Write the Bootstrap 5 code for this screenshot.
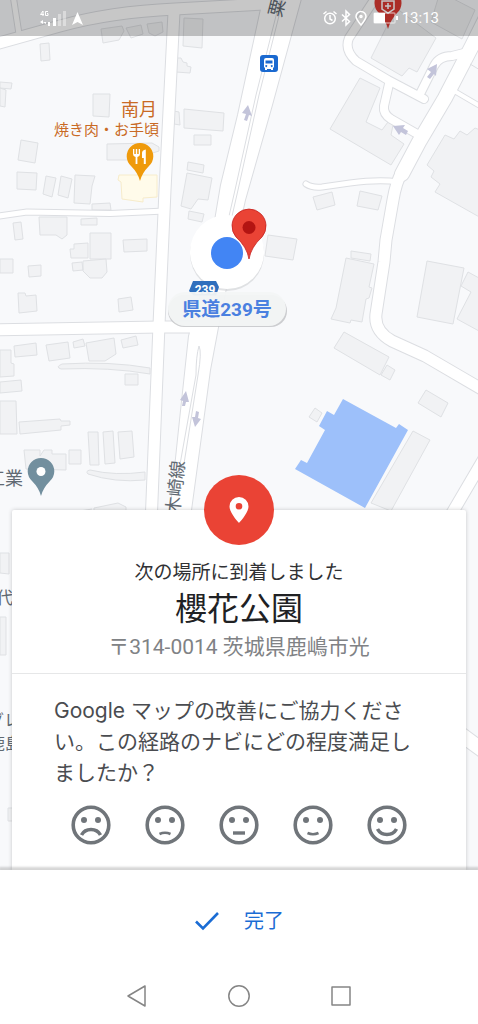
<!DOCTYPE html>
<html lang="ja">
<head>
<meta charset="utf-8">
<meta name="viewport" content="width=device-width, initial-scale=1">
<title>到着 - 櫻花公園</title>
<link href="https://cdn.jsdelivr.net/npm/bootstrap@5.3.0/dist/css/bootstrap.min.css" rel="stylesheet">
<style>
  body { font-family: Roboto, "Noto Sans CJK JP", sans-serif; background: #fff; color: #202124; }
  .map-view { background: #f8f9fb; }
  .map-canvas { z-index: 0; }
  .status-bar { height: 36px; background: rgba(0, 0, 0, .22); color: #fff; padding-left: 39px; padding-right: 39px; z-index: 1; }
  .clock { font-size: 15px; line-height: 20px; }

  .arrival { margin: 0 12px; border: 0; border-radius: 2px 2px 0 0; box-shadow: 0 0 4px rgba(0, 0, 0, .2); z-index: 1; }
  .arrival-head { padding: 51px 16px 12px; border-bottom: 1px solid #e6e7e8; }
  .arrival-pin { width: 70px; height: 70px; background: #ea4335; color: #fff; }
  .notice { font-size: 19px; line-height: 24px; color: #303134; }
  .place { font-size: 32px; line-height: 48px; font-weight: 400; }
  .address { font-size: 21px; line-height: 28px; color: #808285; }
  .survey { padding: 21px 42px 25px; }
  .question { font-family: Inter, "Noto Sans CJK JP", sans-serif; font-size: 21px; line-height: 31px; color: #4a4c50; margin-bottom: 17px; }
  .rating { margin: 0 17px; }
  .face { width: 40px; height: 40px; color: #70757a; }
  .face svg, .done svg, .nav-key svg { display: block; }
  .ring { fill: none; stroke: currentColor; stroke-width: 3.6; }
  .mouth { fill: none; stroke: currentColor; stroke-width: 2.6; }
  .mouth-big { fill: none; stroke: currentColor; stroke-width: 3.6; }

  .bottom-bar { background: #fff; box-shadow: 0 -2px 2px 1px rgba(0, 0, 0, .16); padding-bottom: 4px; z-index: 2; }
  .done { height: 102px; color: #1a6cd4; font-size: 20px; gap: 24px; }
  .done:hover { color: #1a6cd4; }
  .nav-keys { height: 48px; padding: 0 87px; }
  .nav-key { width: 100px; height: 48px; color: #858585; }

  .casing { color: #dcdee2; --edge: 2px; }
  .surface { color: #fff; --edge: 0px; }
  .w4, .w5, .w8, .w12, .w14 { fill: none; stroke: currentColor; stroke-linecap: round; stroke-linejoin: round; }
  .w4 { stroke-width: calc(4px + var(--edge)); }
  .w5 { stroke-width: calc(5px + var(--edge)); }
  .w8 { stroke-width: calc(8px + var(--edge)); }
  .w12 { stroke-width: calc(11px + var(--edge)); }
  .w14 { stroke-width: calc(14px + var(--edge)); }
  .wide { fill: currentColor; stroke: currentColor; stroke-width: var(--edge); }
  .bldg { fill: #f1f2f4; stroke: #dfe1e4; stroke-width: 1; }
  .shop { fill: #fffbea; stroke: #f7eccb; }
  .flow { fill: #c3c4da; }
  .poi { font-family: Roboto, "Noto Sans CJK JP", sans-serif; fill: #616a73; }
  .poi-food { fill: #c96a25; }
  .shield-no { fill: #fff; font-weight: 700; font-size: 12px; }
  .road-tag { fill: #4a80e0; font-weight: 700; font-size: 19px; }
</style>
</head>
<body>
<div class="d-flex flex-column min-vh-100">
  <main class="map-view flex-grow-1 position-relative d-flex flex-column overflow-hidden">

    <svg class="map-canvas position-absolute top-0 start-0 w-100 h-100" viewBox="0 0 478 870" preserveAspectRatio="xMidYMin slice" role="img" aria-label="地図">
      <defs>
        <g id="roads">
          <path class="w12" d="M-8 45 L60 26 Q110 12 175 9 L265 4"/>
          <path class="w5" d="M13 -5 L19 34"/>
          <path class="w12" d="M174 12 L165 190 L159 325 L151 525"/>
          <path class="w5" d="M-8 217 L27 212 L110 213.500 L165 211"/>
          <path class="w12" d="M-8 330 L160 327 L200 327"/>
          <path class="wide" d="M264 -5 L238 115 L221 185 L205 280 L189 336 L180 420 L169 525 L189 525 L210 370 L219 322 L236 240 L245 200 L272 105 L302 -5Z"/>
          <path class="w8" d="M378 -6 L349 38 Q344 50 356 61 L388 80 L424 99"/>
          <path class="w14" d="M486 18 L472 46 L445 98 L419 142 L402 174"/>
          <path class="w12" d="M402 172 Q396 182 393 200 L386 240 L384 262 L376 314 Q374 331 392 341 L425 356 L485 391"/>
          <path class="w5" d="M306 184 Q312 188 322 187 L350 183 Q380 179 398 182"/>
          <path class="w8" d="M420 94 L434 66 Q439 56 452 56 L468 52"/>
          <path class="w8" d="M389 84 L384 106 Q383 114 391 119 L419 135"/>
          <path class="w4" d="M456 92 L485 109"/>
          <path class="w12" d="M448 520 L485 457"/>
          <path class="w14" d="M455 730 L485 752"/>
        </g>
      </defs>
      <rect width="478" height="870" fill="#f8f9fb"/>

      <g class="bldg">
        <path d="M101 29 L122 26 L124 31 L119 40 L103 43Z M126 28 L141 25 L143 34 L131 38Z M147 24 L162 22 L163 32 L155 36 L149 33Z M184 18 L203 19 L202 48 L183 46Z M40 44 L49 43 L50 60 L41 61Z"/>
        <path d="M176 58 L181 58 L183 62 L187 63 L187 66 L191 67 L190 73 L176 72Z M0 82 L12 83 L11 89 L0 88Z M0 88 L6 90 L5 107 L0 106Z M93 94 L110 94 L109 117 L93 116Z"/>
        <path d="M174 111 L179 112 L180 125 L174 124Z M184 109 L224 113 L223 131 L184 128Z M194 135 L211 135 L211 145 L194 145Z M107 144 L152 143 L159 147 L159 151 L130 160 L107 160Z"/>
        <path d="M21 140 L38 143 L35 163 L18 160Z M17 172 L37 173 L36 190 L17 189Z M46 176 L56 178 L52 197 L43 194Z M61 176 L72 179 L68 198 L58 195Z M75 175 L95 176 L92 186 L90 204 L74 203Z"/>
        <path d="M188 162 L204 165 L203 173 L187 170Z M187 173 L212 178 L208 200 L198 199 L191 209 L181 206Z M189 211 L204 214 L202 222 L188 219Z M92 204 L110 203 L111 210 L92 210Z"/>
        <path d="M39 217 L67 217 L67 235 L62 239 L56 235 L40 235Z M13 223 L21 222 L23 239 L15 240Z M81 219 L97 218 L97 225 L81 225Z M90 233 L111 233 L111 259 L90 259Z M74 244 L88 243 L88 258 L71 258 L70 249 L74 249Z"/>
        <path d="M72 263 L82 262 L83 270 L73 271Z M83 261 L106 259 L107 272 L102 278 L90 278 L83 271Z M123 240 L147 239 L147 251 L124 252Z M0 259 L13 259 L13 273 L0 273Z M28 266 L41 265 L41 276 L29 277Z"/>
        <path d="M18 293 L25 293 L26 296 L36 295 L37 311 L19 313Z M118 299 L131 297 L133 310 L119 312Z M14 346 L36 343 L37 355 L15 357Z M46 345 L68 342 L70 358 L49 361Z M73 342 L83 339 L85 346 L74 348Z M86 343 L114 338 L116 354 L105 361 L89 361Z M121 340 L136 336 L138 345 L123 348Z"/>
        <path d="M0 350 L11 350 L11 363 L14 364 L14 376 L0 377Z M0 382 L21 380 L22 391 L0 393Z M0 401 L16 401 L17 434 L0 434Z M19 422 L60 419 L61 421 L70 421 L70 425 L61 426 L61 430 L20 434Z"/>
        <path d="M125 374 L138 374 L138 385 L125 385Z M88 432 L98 432 L99 465 L90 465Z M103 432 L113 431 L115 463 L105 464Z M118 432 L132 431 L134 457 L120 459Z M69 450 L81 450 L81 464 L69 464Z M24 450 L40 450 L40 456 L44 450 L52 450 L52 454 L66 454 L66 470 L26 469Z M80 511 L92 509 M94 508 L118 503 L126 507 L126 520 L94 520Z"/>
        <path d="M0 553 L9 553 L9 574 L0 573Z M0 617 L6 617 L6 655 L0 655Z M8 808 L14 808 L14 821 L8 821Z"/>
        <path d="M396 8 L436 38 L417 72 L409 68 L402 76 L371 58Z M440 -8 L475 10 L462 39 L431 22Z M360 78 L380 88 L366 122 L382 130 L388 122 L393 125 L391 135 L404 144 L391 165 L330 129Z"/>
        <path d="M445 135 L454 139 L460 131 L467 135 L475 128 L490 134 L490 223 L435 192 L440 184 L431 177 L434 171 L427 165Z M313 197 L332 192 L335 205 L317 210Z M360 191 L382 196 L378 210 L357 206Z M268 235 L297 239 L293 260 L265 256Z"/>
        <path d="M351 251 L371 254 L370 261 L351 258Z M346 258 L374 264 L369 287 L372 288 L369 298 L366 299 L362 322 L351 320 L350 323 L331 319 L336 308Z M427 261 L464 268 L453 324 L417 317Z M468 272 L490 284 L490 337 L457 319 L471 292 L461 286Z"/>
        <path d="M344 332 L389 357 L380 375 L334 348Z M387 365 L395 370 L390 380 L381 375Z M426 390 L448 403 L441 417 L418 403Z M413 431 L430 440 L391 511 L371 503Z M315 408 L322 413 L317 422 L309 417Z"/>
        <path d="M62 364 Q110 361 150 368 L150 374 Q110 367 61 369 Q55 367 62 364Z M90 470 Q115 476 145 472 L145 480 Q115 483 88 474 Q85 471 90 470Z"/>
      </g>
      <path class="bldg shop" d="M119 175 L157 175 L157 197 L143 198 L143 202 L122 199 L121 182 L118 180Z"/>
      <path fill="#9dc0fa" d="M343 399 L396 428 L399 424 L408 430 L365 508 L295 469 L301 460 L307 463 L325 430 L319 426 L327 411 L334 415Z"/>

      <use href="#roads" class="casing"/>
      <use href="#roads" class="surface"/>
      <g fill="none" stroke="#dcdee2">
        <path d="M283 0 L259 95 L238 190 L222 260 M280 0 L256 95 L235 190 L219 260"/>
        <path d="M199 346 Q202 352 198 375 L183 470 M199 346 Q196 356 196 375 L179 470"/>
        <path d="M470 64 L485 73"/>
      </g>
      <g class="flow">
        <path d="M248 105 L252 116 L249 115 L247 121 L244 120 L246 114 L242 113Z"/>
        <path d="M437 64 L436 76 L434 74 L430 79 L427 77 L431 72 L427 69Z M393 126 L405 125 L403 128 L408 131 L406 135 L401 132 L399 135Z"/>
        <path d="M186 391 L189 402 L186 402 L185 406 L182 406 L183 401 L180 400Z M195 427 L192 417 L195 417 L196 411 L199 412 L198 418 L201 419Z"/>
      </g>

      <!-- bus stop -->
      <rect x="260" y="55" width="18" height="17" rx="3" fill="#1a69d0"/>
      <path fill="#fff" fill-rule="evenodd" d="M266 58h6q2 0 2 2v7l-1 1v2h-2v-1h-4v1h-2v-2l-1-1v-7q0-2 2-2Zm-.5 2.500v3h7v-3Zm.7 4.500a1 1 0 1 0 .1 0Zm5.500 0a1 1 0 1 0 .1 0Z"/>

      <!-- hospital pin under the status bar -->
      <path fill="#db3a33" d="M388 29 Q386 21 379 13 A13.500 13.500 0 1 1 397 13 Q390 21 388 29Z"/>
      <path fill="none" stroke="#fff" stroke-width="1.500" d="M382 1h12v8l-6 4-6-4ZM388 3v6M385 6h6"/>

      <!-- restaurant -->
      <g class="poi poi-food" text-anchor="end">
        <text class="poi-food" x="157" y="116" font-size="18">南月</text>
        <text class="poi-food" x="159" y="135" font-size="15">焼き肉・お手頃</text>
      </g>
      <path fill="#ef9a0b" d="M140 181 Q138 173 131 166 A13.300 13.300 0 1 1 149 166 Q142 173 140 181Z"/>
      <path fill="#fff" d="M133 149h1.300v5h1.500v-5h1.400v5h1.500v-5h1.300v5q0 2.500-2.600 3v7h-1.800v-7q-2.600-.5-2.600-3Z"/>
      <path fill="#fff" d="M142 158v-5q0-3 3.800-3.500v14.500h-2v-6Z"/>

      <!-- other labels -->
      <text class="poi" x="23" y="485" font-size="18" text-anchor="end">工業</text>
      <path fill="#728f9e" d="M41 496 Q39 488 32 481 A13.300 13.300 0 1 1 50 481 Q43 488 41 496Z"/>
      <circle cx="41" cy="471.500" r="4.500" fill="#fff"/>
      <text class="poi" x="13" y="604" font-size="17" text-anchor="end">代</text>
      <text class="poi" x="20" y="726" font-size="16" text-anchor="end">グレ</text>
      <text class="poi" x="21" y="749" font-size="16" text-anchor="end">鹿島</text>
      <text class="poi" font-size="18" transform="translate(281 18) rotate(-76)">粟生</text>
      <text class="poi" font-size="18" transform="translate(179 515) rotate(-84)">木崎線</text>

      <!-- route shield, current position and destination -->
      <circle cx="227" cy="254" r="37" fill="#cfd1d4" opacity=".6"/>
      <circle cx="227" cy="252" r="37" fill="#fff"/>
      <path fill="#2f6fbd" d="M193 281h23l3 6-3 9h-22l-5-5Z"/>
      <text class="poi shield-no" x="205" y="294" text-anchor="middle">239</text>
      <circle cx="227" cy="253" r="16" fill="#4285f4"/>
      <path fill="#ea4335" stroke="#c5221f" stroke-width=".8" d="M249 259 Q247 247 236 237 A17 17 0 1 1 262 237 Q251 247 249 259Z"/>
      <circle cx="249" cy="227.500" r="6.500" fill="#b31412"/>
      <rect x="168" y="295" width="119" height="32" rx="16" fill="#b9bbbd" opacity=".7"/>
      <rect x="168" y="292" width="118" height="34" rx="17" fill="#f3f5f5" opacity=".95"/>
      <text class="poi road-tag" x="227" y="316" text-anchor="middle">県道239号</text>
    </svg>

    <header class="status-bar d-flex align-items-center justify-content-between position-relative">
      <svg width="46" height="18" viewBox="0 0 46 18" fill="#fff" role="img" aria-label="4G">
        <path fill="none" stroke="#fff" d="M4 7V2L1.500 5.500H5M9 2.500H6.500v4H9V4.500H8"/>
        <path d="M1 13l3-2v4ZM7 15l-3-2h3ZM9 13h2v4H9ZM14 9h3v8h-3Z"/>
        <path opacity=".4" d="M19 5h3v12h-3ZM24 2h3v15h-3Z"/>
        <path d="M38.500 3L44 16l-5.500-3L33 16Z"/>
      </svg>
      <div class="d-flex align-items-center gap-1">
        <svg width="76" height="18" viewBox="0 0 76 18" fill="none" stroke="#fff" stroke-width="1.500" role="img" aria-label="アラーム、Bluetooth、位置情報、電池">
          <circle cx="8" cy="9.500" r="5.300"/><path d="M8 6v4l2.500 1.500M1.500 5L4.500 2.500M14.500 5L11.500 2.500"/>
          <path d="M20 5.500l7.500 7-3.500 3.500V2l3.500 3.500-7.500 7" />
          <path d="M39 16Q34 10 34 7.500a5 5 0 0 1 10 0Q44 10 39 16Z"/><circle cx="39" cy="7.500" r="1"/>
          <rect x="52" y="4" width="21" height="10" rx="1" stroke-opacity=".5"/><path fill="#fff" stroke="none" d="M52 4h11v10H52ZM74 7h2v4h-2Z"/>
        </svg>
        <span class="clock">13:13</span>
      </div>
    </header>

    <section class="card arrival mt-auto">
      <div class="arrival-pin rounded-circle position-absolute top-0 start-50 translate-middle d-flex align-items-center justify-content-center">
        <svg width="22" height="28" viewBox="0 0 22 28" fill="currentColor" fill-rule="evenodd" aria-hidden="true">
          <path d="M11 1a9.500 9.500 0 0 0-9.500 9.500C1.500 17 11 27 11 27s9.500-10 9.500-16.500A9.500 9.500 0 0 0 11 1Zm0 6a3.300 3.300 0 1 1 0 6.600A3.300 3.300 0 0 1 11 7Z"/>
        </svg>
      </div>
      <div class="arrival-head text-center">
        <p class="notice mb-0">次の場所に到着しました</p>
        <h1 class="place mb-0">櫻花公園</h1>
        <p class="address mb-0">〒314-0014 茨城県鹿嶋市光</p>
      </div>
      <div class="survey">
        <p class="question">Google マップの改善にご協力ください。この経路のナビにどの程度満足しましたか？</p>
        <div class="rating d-flex justify-content-between" role="group" aria-label="満足度">
          <button type="button" class="face btn p-0 border-0" aria-label="とても不満"><svg width="40" height="40" viewBox="0 0 40 40"><circle class="ring" cx="20" cy="20" r="17.800"/><g fill="currentColor"><circle cx="13" cy="15" r="3"/><circle cx="27" cy="15" r="3"/></g><path class="mouth-big" d="M10.500 30Q13.500 24.500 20 24.500T29.500 30"/></svg></button>
          <button type="button" class="face btn p-0 border-0" aria-label="不満"><svg width="40" height="40" viewBox="0 0 40 40"><circle class="ring" cx="20" cy="20" r="17.800"/><g fill="currentColor"><circle cx="13" cy="15" r="3"/><circle cx="27" cy="15" r="3"/></g><path class="mouth" d="M14.500 29Q20 26.500 25.500 29"/></svg></button>
          <button type="button" class="face btn p-0 border-0" aria-label="普通"><svg width="40" height="40" viewBox="0 0 40 40"><circle class="ring" cx="20" cy="20" r="17.800"/><g fill="currentColor"><circle cx="13" cy="15" r="3"/><circle cx="27" cy="15" r="3"/><path d="M14 26.300h12v3.400H14Z"/></g></svg></button>
          <button type="button" class="face btn p-0 border-0" aria-label="満足"><svg width="40" height="40" viewBox="0 0 40 40"><circle class="ring" cx="20" cy="20" r="17.800"/><g fill="currentColor"><circle cx="13" cy="15" r="3"/><circle cx="27" cy="15" r="3"/></g><path class="mouth" d="M14.500 28Q20 30.500 25.500 28"/></svg></button>
          <button type="button" class="face btn p-0 border-0" aria-label="とても満足"><svg width="40" height="40" viewBox="0 0 40 40"><circle class="ring" cx="20" cy="20" r="17.800"/><g fill="currentColor"><circle cx="13" cy="15" r="3"/><circle cx="27" cy="15" r="3"/></g><path class="mouth-big" d="M10.500 24Q13.500 29.500 20 29.500T29.500 24"/></svg></button>
        </div>
      </div>
    </section>
  </main>

  <footer class="bottom-bar position-relative">
    <button type="button" class="done btn w-100 border-0 rounded-0 d-flex align-items-center justify-content-center">
      <svg width="26" height="20" viewBox="0 0 26 20" fill="none" stroke="currentColor" stroke-width="2.600" aria-hidden="true"><path d="M2 10.500L9 17.500L24 2"/></svg>
      <span>完了</span>
    </button>
    <nav class="nav-keys d-flex align-items-center justify-content-between" aria-label="システム">
      <button type="button" class="nav-key btn p-0 border-0 d-flex align-items-center justify-content-center" aria-label="戻る"><svg width="22" height="24" viewBox="0 0 22 24" fill="none" stroke="currentColor" stroke-width="1.500" stroke-linejoin="round"><path d="M19 2v20L2 12Z"/></svg></button>
      <button type="button" class="nav-key btn p-0 border-0 d-flex align-items-center justify-content-center" aria-label="ホーム"><svg width="24" height="24" viewBox="0 0 24 24" fill="none" stroke="currentColor" stroke-width="1.500"><circle cx="12" cy="12" r="10.200"/></svg></button>
      <button type="button" class="nav-key btn p-0 border-0 d-flex align-items-center justify-content-center" aria-label="履歴"><svg width="24" height="24" viewBox="0 0 24 24" fill="none" stroke="currentColor" stroke-width="1.500" stroke-linejoin="round"><rect x="3" y="3" width="18" height="18"/></svg></button>
    </nav>
  </footer>
</div>
<script src="https://cdn.jsdelivr.net/npm/bootstrap@5.3.0/dist/js/bootstrap.bundle.min.js"></script>
</body>
</html>
